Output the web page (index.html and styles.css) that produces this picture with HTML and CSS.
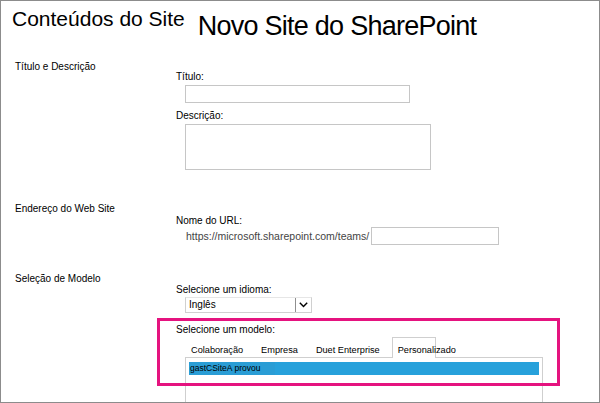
FILE: index.html
```html
<!DOCTYPE html>
<html lang="pt">
<head>
<meta charset="utf-8">
<title>Novo Site do SharePoint</title>
<link rel="stylesheet" href="styles.css">
</head>
<body>
<div class="frame">
  <header class="header">
    <h1 class="crumb">Conteúdos do Site</h1>
    <h2 class="page-title">Novo Site do SharePoint</h2>
  </header>

  <section class="section s-title">
    <div class="sec-label">Título e Descrição</div>
    <div class="sec-body">
      <div class="field-label">Título:</div>
      <div class="input title-input"></div>
      <div class="field-label gap-desc">Descrição:</div>
      <div class="input desc-input"></div>
    </div>
  </section>

  <section class="section s-url">
    <div class="sec-label">Endereço do Web Site</div>
    <div class="sec-body">
      <div class="field-label">Nome do URL:</div>
      <div class="url-row">
        <span class="url-prefix">https://microsoft.sharepoint.com/teams/</span>
        <div class="input url-input"></div>
      </div>
    </div>
  </section>

  <section class="section s-template">
    <div class="sec-label">Seleção de Modelo</div>
    <div class="sec-body">
      <div class="field-label">Selecione um idioma:</div>
      <div class="select">
        <span class="select-value">Inglês</span>
        <span class="select-btn">
          <svg width="9" height="6" viewBox="0 0 9 6"><path d="M0.8 0.8 L4.5 4.6 L8.2 0.8" fill="none" stroke="#000" stroke-width="1.4"/></svg>
        </span>
      </div>
      <div class="field-label gap-model">Selecione um modelo:</div>
      <div class="tabs">
        <span class="tab">Colaboração</span>
        <span class="tab">Empresa</span>
        <span class="tab">Duet Enterprise</span>
        <span class="tab tab-active">Personalizado</span>
      </div>
      <div class="listbox">
        <div class="list-item selected"><span class="item-text">gastCSiteA provou</span></div>
      </div>
    </div>
  </section>

  <div class="highlight"></div>
</div>
</body>
</html>
```

FILE: styles.css
```css
html, body {
  margin: 0;
  padding: 0;
  background: #fff;
}

body {
  font-family: "Liberation Sans", Arial, sans-serif;
  color: #000;
}

.frame {
  position: relative;
  width: 600px;
  height: 403px;
  box-sizing: border-box;
  border: 1px solid #8c8c8c;
  overflow: hidden;
}

.header {
  display: flex;
  align-items: flex-start;
  padding: 6px 0 0 11px;
}

.crumb {
  margin: 0;
  font-size: 21px;
  line-height: 24px;
  font-weight: normal;
}

.page-title {
  margin: 4px 0 0 13px;
  font-size: 27px;
  line-height: 30px;
  font-weight: normal;
  letter-spacing: -0.75px;
}

.section {
  display: grid;
  grid-template-columns: 161px 1fr;
  padding-left: 14px;
}

.sec-label,
.field-label {
  font-size: 10px;
  line-height: 12px;
}

.s-title { margin-top: 20px; }
.s-url { margin-top: 33px; }
.s-template { margin-top: 28px; }

.s-title .sec-body { padding-top: 10px; }
.s-url .sec-body { padding-top: 12px; }
.s-template .sec-body { padding-top: 11px; }

.input {
  box-sizing: border-box;
  border: 1px solid #c6c6c6;
  background: #fff;
}

.title-input {
  margin: 2px 0 0 9px;
  width: 225px;
  height: 18px;
}

.gap-desc { margin-top: 7px; }

.desc-input {
  margin: 2px 0 0 9px;
  width: 246px;
  height: 46px;
}

.url-row {
  display: flex;
  align-items: center;
  margin-left: 10px;
  height: 18px;
}

.url-prefix {
  font-size: 10.5px;
  line-height: 12px;
  color: #444;
  white-space: nowrap;
}

.url-input {
  margin-left: 2px;
  width: 128px;
  height: 18px;
}

.select {
  display: flex;
  align-items: stretch;
  box-sizing: border-box;
  margin: 1px 0 0 9px;
  width: 127px;
  height: 16px;
  border: 1px solid #d0d0d0;
  border-top-color: #e6e6e6;
  background: #fff;
}

.select-value {
  flex: 1;
  padding-left: 3px;
  font-size: 10px;
  line-height: 14px;
}

.select-btn {
  display: flex;
  align-items: center;
  justify-content: center;
  width: 15px;
  border-left: 1px solid #8f8f8f;
  background: #fff;
}

.gap-model { margin-top: 11px; }

.tabs {
  display: flex;
  gap: 6px;
  margin: 1px 0 0 9px;
  position: relative;
  z-index: 1;
}

.tab {
  box-sizing: border-box;
  height: 20px;
  padding: 6px 5px 0;
  font-size: 9.2px;
  line-height: 12px;
  white-space: nowrap;
  border: 1px solid transparent;
  border-bottom: none;
}

.tab-active {
  width: 44px;
  height: 21px;
  margin-bottom: -1px;
  border-color: #cfcfcf;
  background: #fff;
  overflow: visible;
}

.listbox {
  box-sizing: border-box;
  margin-left: 9px;
  width: 358px;
  height: 70px;
  border: 1px solid #cfcfcf;
  padding: 4px 3px;
}

.list-item {
  height: 13px;
  font-size: 8.5px;
  line-height: 13px;
}

.selected {
  background: #27a1db;
}

.item-text {
  display: inline-block;
  padding: 0 4px 0 1px;
  background: #2a9dd5;
  width: 81px;
}

.highlight {
  position: absolute;
  left: 156px;
  top: 317px;
  width: 403px;
  height: 68px;
  box-sizing: border-box;
  border: 3px solid #e5137f;
  pointer-events: none;
}
```
